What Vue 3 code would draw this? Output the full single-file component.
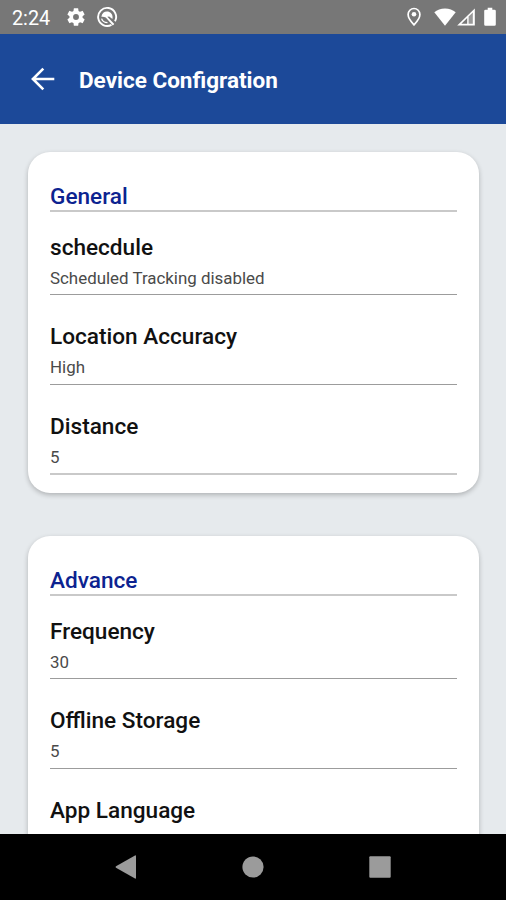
<script setup>
const sections = [
  {
    title: 'General',
    items: [
      { label: 'schecdule', value: 'Scheduled Tracking disabled' },
      { label: 'Location Accuracy', value: 'High' },
      { label: 'Distance', value: '5' },
    ],
  },
  {
    title: 'Advance',
    items: [
      { label: 'Frequency', value: '30' },
      { label: 'Offline Storage', value: '5' },
      { label: 'App Language', value: '' },
    ],
  },
]
</script>

<template>
  <div class="screen">
    <div class="status">
      <span class="time">2:24</span>
      <svg class="gear" width="22" height="22" viewBox="0 0 24 24" fill="#fff">
        <path d="M19.14 12.94c.04-.3.06-.61.06-.94s-.02-.64-.07-.94l2.03-1.58a.49.49 0 0 0 .12-.61l-1.92-3.32a.49.49 0 0 0-.59-.22l-2.39.96a7 7 0 0 0-1.62-.94l-.36-2.54a.48.48 0 0 0-.48-.41h-3.84a.48.48 0 0 0-.47.41l-.36 2.54c-.59.24-1.13.57-1.62.94l-2.39-.96a.48.48 0 0 0-.59.22L2.74 8.87a.47.47 0 0 0 .12.61l2.03 1.58a7 7 0 0 0 0 1.88l-2.03 1.58a.49.49 0 0 0-.12.61l1.92 3.32c.12.22.37.29.59.22l2.39-.96c.5.38 1.03.7 1.62.94l.36 2.54c.05.24.24.41.48.41h3.84c.24 0 .44-.17.47-.41l.36-2.54a7 7 0 0 0 1.62-.94l2.39.96c.22.08.47 0 .59-.22l1.92-3.32a.47.47 0 0 0-.12-.61zM12 15.2a3.2 3.2 0 1 1 0-6.4 3.2 3.2 0 0 1 0 6.4z" />
      </svg>
      <svg class="ring" width="22" height="22" viewBox="0 0 22 22" fill="none" stroke="#fff">
        <path d="M15.500 18.800A9 9 0 1 1 19 15.300" stroke-width="1.900" />
        <path d="M5.400 10.800C5.800 7.300 8.200 5.600 11 5.600c3.200 0 5.500 2.300 5.600 5.600l-.2 1.800-3.200-2.500-1.900.3 7 7.200-1.500 1.400-7-7.800c-1.500-.9-3-1-4.400-.8z" fill="#fff" stroke="none" />
        <path d="M5.600 12.600c.8 2.600 2.800 4 5.900 4" stroke-width="1.300" />
      </svg>
      <span class="spacer"></span>
      <svg class="pin" width="16" height="20" viewBox="0 0 16 20" fill="none" stroke="#fff">
        <path d="M8 1.500a5.900 5.900 0 0 0-5.900 5.900C2.100 11.500 8 17.800 8 17.800s5.900-6.300 5.900-10.400A5.900 5.900 0 0 0 8 1.500z" stroke-width="1.700" />
        <circle cx="8" cy="7.300" r="2.300" fill="#fff" stroke="none" />
      </svg>
      <svg class="wifi" width="22" height="20" viewBox="0 0 22 20" fill="#fff">
        <path d="M11 18.800L.3 5.300C3.100 3 6.800 1.500 11 1.500s7.900 1.500 10.700 3.800z" />
      </svg>
      <svg class="signal" width="18" height="20" viewBox="0 0 18 20">
        <path d="M17.800 1.500v17H.2z" fill="#fff" />
        <path d="M10.200 11v5.800H4.400z" fill="#777" />
        <path d="M11.600 9.600l4.200-4v11.200h-4.200z" fill="#989898" />
      </svg>
      <svg class="battery" width="12" height="20" viewBox="0 0 12 20" fill="#fff">
        <path d="M3.700.8h4.600v2h2.200a1.300 1.300 0 0 1 1.300 1.300v13.400a1.300 1.300 0 0 1-1.300 1.300h-9a1.300 1.300 0 0 1-1.300-1.300V4.100a1.300 1.300 0 0 1 1.300-1.300h2.200z" />
      </svg>
    </div>

    <header class="bar">
      <svg width="24" height="24" viewBox="0 0 24 24" fill="none" stroke="#fff" stroke-width="2.600">
        <path d="M23.300 12H2.500M12.300 1.600L1.900 12l10.400 10.400" />
      </svg>
      <h1>Device Configration</h1>
    </header>

    <main class="content">
      <section v-for="s in sections" :key="s.title" class="card">
        <h2>{{ s.title }}</h2>
        <div v-for="i in s.items" :key="i.label" class="item">
          <div class="label">{{ i.label }}</div>
          <div v-if="i.value" class="value">{{ i.value }}</div>
        </div>
      </section>
    </main>

    <nav class="nav">
      <svg width="22" height="24" viewBox="0 0 22 24" fill="#9b9b9b">
        <path d="M20 .5Q21 0 21 1.200v21.600Q21 24 20 23.500L1 12.700Q0 12 1 11.300z" />
      </svg>
      <svg width="22" height="22" viewBox="0 0 22 22" fill="#9b9b9b"><circle cx="11" cy="11" r="10.600" /></svg>
      <svg width="22" height="22" viewBox="0 0 22 22" fill="#9b9b9b"><rect x=".3" y=".3" width="21.400" height="21.400" rx="1" /></svg>
    </nav>
  </div>
</template>

<style>
body {
  margin: 0;
}
</style>

<style scoped>
.screen {
  width: 506px;
  height: 900px;
  display: flex;
  flex-direction: column;
  overflow: hidden;
  background: #e6eaed;
  font-family: Roboto, sans-serif;
}
.status {
  flex: none;
  height: 34px;
  box-sizing: border-box;
  padding: 0 10px 0 12px;
  display: flex;
  align-items: center;
  background: #777;
  color: #fff;
}
.time {
  width: 53px;
  font-size: 19.800px;
  line-height: 24px;
  padding-top: 4px;
}
.ring {
  margin-left: 9px;
}
.spacer {
  flex: 1;
}
.pin {
  margin-right: 12px;
}
.signal {
  margin: 0 9px 0 1px;
}
.bar {
  flex: none;
  height: 90px;
  box-sizing: border-box;
  padding: 0 0 0 31px;
  display: flex;
  align-items: center;
  gap: 24px;
  background: #1c4999;
  color: #fff;
}
h1 {
  margin: 0;
  padding-top: 2px;
  font-size: 22.500px;
  font-weight: 700;
  line-height: 28px;
}
.content {
  flex: 1;
  min-height: 0;
  overflow: hidden;
  padding: 28px 27px 0 28px;
}
.card {
  height: 341px;
  box-sizing: border-box;
  padding: 30px 22px 0;
  margin-bottom: 43px;
  border-radius: 22px;
  background: #fff;
  box-shadow: 0 2px 5px rgba(0, 0, 0, 0.24);
}
h2 {
  margin: 0 0 -6px;
  height: 30px;
  box-sizing: border-box;
  border-bottom: 2px solid #c9c9c9;
  font-size: 22.600px;
  line-height: 30px;
  font-weight: 500;
  color: #0c2390;
}
.item {
  height: 89.300px;
  box-sizing: border-box;
  padding-top: 28px;
  border-bottom: 1.500px solid #9c9c9c;
}
.item:last-child {
  height: 90px;
  border-bottom: 2px solid #c9c9c9;
}
.label {
  font-size: 22.600px;
  line-height: 28px;
  font-weight: 500;
  color: #111;
}
.value {
  margin-top: 5px;
  font-size: 16.900px;
  line-height: 22px;
  color: #4a4a4a;
}
.nav {
  flex: none;
  height: 66px;
  display: flex;
  align-items: center;
  justify-content: center;
  gap: 105px;
  background: #000;
}
</style>
